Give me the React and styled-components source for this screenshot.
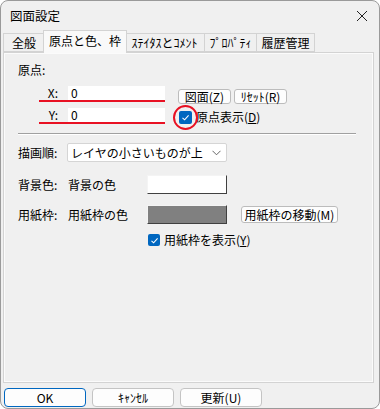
import React from "react";
import styled, { createGlobalStyle } from "styled-components";

const tabs = [
    { label: "全般", width: 42 },
    { label: "原点と色、枠", width: 80, active: true },
    { label: "ｽﾃｲﾀｽとｺﾒﾝﾄ", width: 80 },
    { label: "ﾌﾟﾛﾊﾟﾃｨ", width: 52 },
    { label: "履歴管理", width: 58 },
];

const Check = () => (
    <svg width="9" height="9" viewBox="0 0 9 9">
        <path d="M1.5 4.8 L3.6 6.8 L7.6 2.3" fill="none" stroke="#fff" strokeWidth="1.1" />
    </svg>
);

const App = () => {
    return (
        <>
            <GlobalStyle />
            <Window>
                <TitleBar>
                    <Title>図面設定</Title>
                    <CloseButton>
                        <svg width="12" height="12" viewBox="0 0 12 12">
                            <path d="M1 1 L11 11 M11 1 L1 11" stroke="#222" strokeWidth="1" />
                        </svg>
                    </CloseButton>
                </TitleBar>
                <TabStrip>
                    {tabs.map((t) => (
                        <Tab key={t.label} $w={t.width} $active={t.active}>
                            {t.label}
                        </Tab>
                    ))}
                </TabStrip>
                <Panel>
                    <Label>原点:</Label>
                    <OriginBlock>
                        <CoordColumn>
                            <CoordRow>
                                <CoordLabel>X:</CoordLabel>
                                <TextBox>0</TextBox>
                            </CoordRow>
                            <CoordRow $gap>
                                <CoordLabel>Y:</CoordLabel>
                                <TextBox>0</TextBox>
                            </CoordRow>
                        </CoordColumn>
                        <SideColumn>
                            <ButtonRow>
                                <SmallButton $w={53}>図面(Z)</SmallButton>
                                <SmallButton $w={53}>ﾘｾｯﾄ(R)</SmallButton>
                            </ButtonRow>
                            <CheckRow>
                                <CheckBox>
                                    <Check />
                                    <Ring />
                                </CheckBox>
                                <CheckLabel>
                                    原点表示(<u>D</u>)
                                </CheckLabel>
                            </CheckRow>
                        </SideColumn>
                    </OriginBlock>
                    <Separator />
                    <FormRow $top={8}>
                        <RowLabel $w={49}>描画順:</RowLabel>
                        <Select>
                            <span>レイヤの小さいものが上</span>
                            <svg width="9" height="6" viewBox="0 0 9 6">
                                <path d="M0.5 0.8 L4.5 4.8 L8.5 0.8" fill="none" stroke="#555" strokeWidth="0.9" />
                            </svg>
                        </Select>
                    </FormRow>
                    <FormRow $top={13}>
                        <RowLabel $w={50}>背景色:</RowLabel>
                        <RowLabel $w={79}>背景の色</RowLabel>
                        <ColorBox $color="#ffffff" />
                    </FormRow>
                    <FormRow $top={11}>
                        <RowLabel $w={50}>用紙枠:</RowLabel>
                        <RowLabel $w={79}>用紙枠の色</RowLabel>
                        <ColorBox $color="#808080" />
                        <MoveButton>用紙枠の移動(M)</MoveButton>
                    </FormRow>
                    <PaperCheckRow>
                        <CheckBox $small>
                            <Check />
                        </CheckBox>
                        <CheckLabel>
                            用紙枠を表示(<u>Y</u>)
                        </CheckLabel>
                    </PaperCheckRow>
                </Panel>
                <Footer>
                    <DialogButton $default>OK</DialogButton>
                    <DialogButton>ｷｬﾝｾﾙ</DialogButton>
                    <DialogButton>更新(U)</DialogButton>
                </Footer>
            </Window>
        </>
    );
};

const GlobalStyle = createGlobalStyle`
    body {
        margin: 0;
        background: #ffffff;
        font-family: "Noto Sans CJK JP", "Noto Sans", sans-serif;
        font-size: 12px;
        color: #000;
    }
    u {
        text-decoration-thickness: 1px;
        text-underline-offset: 1px;
    }
`;
const Window = styled.div`
    width: 380px;
    height: 409px;
    box-sizing: border-box;
    border: 1px solid #9a9a9a;
    border-radius: 8px;
    background: #f0f0f0;
    overflow: hidden;
    display: flex;
    flex-direction: column;
`;
const TitleBar = styled.div`
    height: 29px;
    display: flex;
    align-items: center;
    justify-content: space-between;
    padding: 0 10px 0 9px;
`;
const Title = styled.span`
    font-size: 12.5px;
    line-height: 14px;
`;
const CloseButton = styled.div`
    display: flex;
    margin-right: 1px;
`;
const TabStrip = styled.div`
    height: 22px;
    display: flex;
    align-items: flex-end;
    padding-left: 2px;
    position: relative;
    z-index: 1;
`;
const Tab = styled.div`
    box-sizing: border-box;
    width: ${(p) => (p.$active ? p.$w + 4 : p.$w)}px;
    height: ${(p) => (p.$active ? 23 : 19)}px;
    margin: 0 ${(p) => (p.$active ? -2 : 0)}px;
    margin-bottom: ${(p) => (p.$active ? -1 : 0)}px;
    border: 1px solid #d3d3d3;
    border-bottom: ${(p) => (p.$active ? "none" : "1px solid #d3d3d3")};
    border-left: ${(p) => (p.$active ? "1px solid #d3d3d3" : "none")};
    background: ${(p) => (p.$active ? "#f9f9f9" : "#f0f0f0")};
    position: relative;
    z-index: ${(p) => (p.$active ? 2 : 1)};
    display: flex;
    align-items: center;
    justify-content: center;
    font-size: 12px;
    line-height: 14px;
    padding-bottom: ${(p) => (p.$active ? 3 : 0)}px;
    &:first-child {
        border-left: 1px solid #d3d3d3;
    }
`;
const Panel = styled.div`
    box-sizing: border-box;
    margin: 0 5px 0 2px;
    height: 331px;
    border: 1px solid #d3d3d3;
    box-shadow: inset 0 0 0 1px #fbfbfb;
    background: #f0f0f0;
    padding: 10px 17px 0 14px;
    display: flex;
    flex-direction: column;
`;
const Label = styled.div`
    line-height: 14px;
    height: 14px;
`;
const OriginBlock = styled.div`
    display: flex;
    margin-top: 9px;
    margin-left: 21px;
`;
const CoordColumn = styled.div`
    display: flex;
    flex-direction: column;
    width: 126px;
`;
const CoordRow = styled.div`
    display: flex;
    align-items: center;
    border-bottom: 2px solid #e81123;
    margin-top: ${(p) => (p.$gap ? 6 : 0)}px;
`;
const CoordLabel = styled.span`
    width: 29px;
    text-align: right;
    padding-right: 10px;
    line-height: 14px;
    box-sizing: border-box;
`;
const TextBox = styled.div`
    width: 97px;
    height: 14px;
    background: #fff;
    line-height: 14px;
    padding-left: 3px;
    box-sizing: border-box;
`;
const SideColumn = styled.div`
    display: flex;
    flex-direction: column;
    margin-left: 13px;
    padding-top: 3px;
`;
const ButtonRow = styled.div`
    display: flex;
    gap: 3px;
`;
const SmallButton = styled.div`
    box-sizing: border-box;
    width: ${(p) => p.$w}px;
    height: 15px;
    border: 1px solid #bcbcbc;
    border-radius: 3px;
    background: #fdfdfd;
    display: flex;
    align-items: center;
    justify-content: center;
    line-height: 13px;
    white-space: nowrap;
`;
const MoveButton = styled(SmallButton)`
    width: 97px;
    height: 17px;
    margin-left: 14px;
`;
const CheckRow = styled.div`
    display: flex;
    align-items: center;
    margin-top: 6px;
    margin-left: 1px;
`;
const CheckBox = styled.div`
    position: relative;
    width: ${(p) => (p.$small ? 12 : 13)}px;
    height: ${(p) => (p.$small ? 12 : 13)}px;
    border-radius: 2px;
    background: #0067c0;
    display: flex;
    align-items: center;
    justify-content: center;
    flex-shrink: 0;
`;
const Ring = styled.div`
    position: absolute;
    left: -6px;
    top: -6px;
    width: 21px;
    height: 21px;
    border: 2px solid #e81123;
    border-radius: 50%;
`;
const CheckLabel = styled.span`
    margin-left: 4px;
    line-height: 14px;
`;
const Separator = styled.div`
    margin-top: 9px;
    height: 1px;
    background: #a0a0a0;
    border-bottom: 1px solid #ffffff;
`;
const FormRow = styled.div`
    display: flex;
    align-items: center;
    margin-top: ${(p) => p.$top}px;
    height: 19px;
`;
const RowLabel = styled.span`
    width: ${(p) => p.$w}px;
    line-height: 14px;
    flex-shrink: 0;
`;
const Select = styled.div`
    box-sizing: border-box;
    width: 160px;
    height: 19px;
    background: #fff;
    border: 1px solid #d5d5d5;
    border-radius: 2px;
    display: flex;
    align-items: center;
    justify-content: space-between;
    padding: 0 5px 0 3px;
    line-height: 14px;
`;
const ColorBox = styled.div`
    box-sizing: border-box;
    width: 80px;
    height: 19px;
    background: ${(p) => p.$color};
    border-top: 1px solid #f4f4f4;
    border-left: 1px solid #f4f4f4;
    border-right: 1px solid #404040;
    border-bottom: 1px solid #404040;
    flex-shrink: 0;
`;
const PaperCheckRow = styled.div`
    display: flex;
    align-items: center;
    margin-top: 9px;
    margin-left: 130px;
`;
const Footer = styled.div`
    display: flex;
    gap: 6px;
    margin-top: 5px;
    padding-left: 3px;
`;
const DialogButton = styled.div`
    box-sizing: border-box;
    width: 82px;
    height: 19px;
    border: 1px solid ${(p) => (p.$default ? "#0067c0" : "#c4c4c4")};
    border-radius: 4px;
    background: #fdfdfd;
    display: flex;
    align-items: center;
    justify-content: center;
    line-height: 14px;
`;

export default App;
